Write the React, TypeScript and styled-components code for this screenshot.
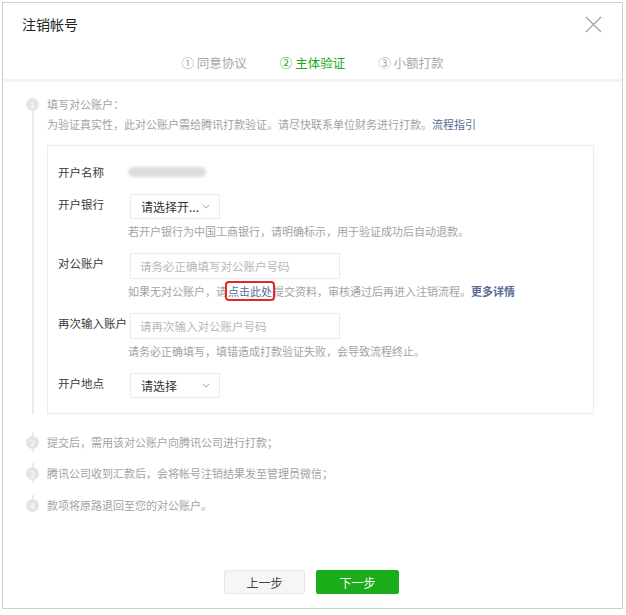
import styled, { createGlobalStyle } from 'styled-components'

const GlobalStyle = createGlobalStyle`
  html, body {
    margin: 0;
    padding: 0;
    background: #fff;
  }
  body {
    font-family: "Noto Sans CJK SC", "Noto Sans", sans-serif;
    color: #353535;
  }
`

const steps = [
  { no: '①', text: '同意协议' },
  { no: '②', text: '主体验证', active: true },
  { no: '③', text: '小额打款' },
]

export default function App() {
  return (
    <>
      <GlobalStyle />
      <Dialog>
        <Header>
          <Title>注销帐号</Title>
          <CloseIcon viewBox="0 0 18 18">
            <path d="M1 1 L17 17 M17 1 L1 17" stroke="#a3a3a3" strokeWidth="1.3" fill="none" />
          </CloseIcon>
        </Header>

        <StepNav>
          {steps.map((s) => (
            <StepTab key={s.no} $active={!!s.active}>
              {s.no} {s.text}
            </StepTab>
          ))}
        </StepNav>

        <Content>
          <Timeline>
            <Item $pad={18}>
              <Marker $first>
                <Dot>1</Dot>
              </Marker>
              <div>
                <ItemText>填写对公账户：</ItemText>
                <ItemText>
                  为验证真实性，此对公账户需给腾讯打款验证。请尽快联系单位财务进行打款。<Link>流程指引</Link>
                </ItemText>

                <FormBox>
                  <Row>
                    <Label>开户名称</Label>
                    <Field>
                      <Blurred />
                    </Field>
                  </Row>

                  <Row>
                    <Label>开户银行</Label>
                    <Field>
                      <Select>
                        请选择开...<Chevron />
                      </Select>
                      <Hint>若开户银行为中国工商银行，请明确标示，用于验证成功后自动退款。</Hint>
                    </Field>
                  </Row>

                  <Row>
                    <Label>对公账户</Label>
                    <Field>
                      <Input placeholder="请务必正确填写对公账户号码" />
                      <Hint>
                        如果无对公账户，请<Marked>点击此处</Marked>提交资料，审核通过后再进入注销流程。<Link $bold>更多详情</Link>
                      </Hint>
                    </Field>
                  </Row>

                  <Row>
                    <Label>再次输入账户</Label>
                    <Field>
                      <Input placeholder="请再次输入对公账户号码" />
                      <Hint>请务必正确填写，填错造成打款验证失败，会导致流程终止。</Hint>
                    </Field>
                  </Row>

                  <Row>
                    <Label>开户地点</Label>
                    <Field>
                      <Select>
                        请选择<Chevron />
                      </Select>
                    </Field>
                  </Row>
                </FormBox>
              </div>
            </Item>

            <Item $pad={11}>
              <Marker>
                <Dot>2</Dot>
              </Marker>
              <ItemText>提交后，需用该对公账户向腾讯公司进行打款；</ItemText>
            </Item>

            <Item $pad={12}>
              <Marker>
                <Dot>3</Dot>
              </Marker>
              <ItemText>腾讯公司收到汇款后，会将帐号注销结果发至管理员微信；</ItemText>
            </Item>

            <Item $pad={0}>
              <Marker $last>
                <Dot>4</Dot>
              </Marker>
              <ItemText>款项将原路退回至您的对公账户。</ItemText>
            </Item>
          </Timeline>
        </Content>

        <Footer>
          <Button>上一步</Button>
          <Button $primary>下一步</Button>
        </Footer>
      </Dialog>
    </>
  )
}

function Chevron() {
  return (
    <ChevronSvg viewBox="0 0 10 6">
      <path d="M1 1 L5 5 L9 1" stroke="#999" strokeWidth="1.1" fill="none" />
    </ChevronSvg>
  )
}

const Dialog = styled.div`
  margin: 2px 0 0 2px;
  width: 621px;
  height: 607px;
  box-sizing: border-box;
  border: 1px solid #cfcfcf;
  display: flex;
  flex-direction: column;
  background: #fff;
`

const Header = styled.div`
  height: 42px;
  display: flex;
  align-items: center;
  justify-content: space-between;
  padding: 0 20px 0 19px;
`

const Title = styled.div`
  font-size: 14px;
  color: #222;
`

const CloseIcon = styled.svg`
  width: 17px;
  height: 17px;
`

const StepNav = styled.div`
  height: 34px;
  display: flex;
  justify-content: center;
  align-items: center;
  gap: 33px;
  border-bottom: 3px solid #f3f3f3;
`

const StepTab = styled.div<{ $active: boolean }>`
  font-size: 12.5px;
  color: ${(p) => (p.$active ? '#1aad19' : '#a8a8a8')};
`

const Content = styled.div`
  padding: 12px 28px 0 23px;
`

const Timeline = styled.div`
  display: flex;
  flex-direction: column;
`

const Item = styled.div<{ $pad: number }>`
  display: grid;
  grid-template-columns: 13px 1fr;
  column-gap: 8px;
  padding-bottom: ${(p) => p.$pad}px;
`

const Marker = styled.div<{ $first?: boolean; $last?: boolean }>`
  display: flex;
  flex-direction: column;
  align-items: center;

  &::before {
    content: '';
    width: 2px;
    height: 4px;
    background: ${(p) => (p.$first ? 'transparent' : '#ebebeb')};
  }

  &::after {
    content: '';
    width: 2px;
    flex: 1;
    background: ${(p) => (p.$last ? 'transparent' : '#ebebeb')};
  }
`

const Dot = styled.div`
  width: 13px;
  height: 13px;
  border-radius: 50%;
  background: #e4e4e4;
  color: #fff;
  font-size: 8px;
  line-height: 13px;
  text-align: center;
  flex-shrink: 0;
`

const ItemText = styled.div`
  font-size: 11px;
  line-height: 20px;
  color: #a3a3a3;
`

const Link = styled.span<{ $bold?: boolean }>`
  color: #576b95;
  font-weight: ${(p) => (p.$bold ? 600 : 400)};
`

const Marked = styled.span`
  color: #576b95;
  outline: 2px solid #e0272a;
  outline-offset: 0;
  border-radius: 2px;
  padding: 0 1px;
`

const FormBox = styled.div`
  margin-top: 11px;
  border: 1px solid #ececec;
  padding: 16px 10px 15px 10px;
  display: flex;
  flex-direction: column;
  gap: 12px;
`

const Row = styled.div`
  display: grid;
  grid-template-columns: 72px 1fr;
`

const Label = styled.div`
  font-size: 11.5px;
  line-height: 20px;
  color: #3a3a3a;
  white-space: nowrap;
`

const Field = styled.div`
  display: flex;
  flex-direction: column;
  align-items: flex-start;
  min-height: 20px;
  justify-content: center;
`

const Blurred = styled.span`
  display: block;
  width: 78px;
  height: 10px;
  margin-left: -2px;
  border-radius: 5px;
  background: #dcdcdc;
  filter: blur(1.6px);
`

const Select = styled.div`
  width: 90px;
  height: 25px;
  box-sizing: border-box;
  border: 1px solid #ebebeb;
  padding: 0 9px 0 10px;
  display: flex;
  align-items: center;
  justify-content: space-between;
  font-size: 12px;
  color: #333;
`

const ChevronSvg = styled.svg`
  width: 8px;
  height: 5px;
`

const Input = styled.input`
  width: 210px;
  height: 26px;
  box-sizing: border-box;
  border: 1px solid #ebebeb;
  padding: 0 9px;
  font-family: inherit;
  font-size: 11.5px;
  outline: none;

  &::placeholder {
    color: #b8b8b8;
  }
`

const Hint = styled.div`
  margin-top: 2px;
  margin-left: -2px;
  font-size: 11px;
  line-height: 20px;
  color: #a3a3a3;
  white-space: nowrap;
`

const Footer = styled.div`
  margin-top: auto;
  padding-bottom: 14px;
  display: flex;
  justify-content: center;
  gap: 11px;
  padding-right: 2px;
`

const Button = styled.button<{ $primary?: boolean }>`
  width: ${(p) => (p.$primary ? 83 : 81)}px;
  height: 24px;
  border-radius: 2px;
  font-family: inherit;
  font-size: 12px;
  cursor: pointer;
  border: 1px solid ${(p) => (p.$primary ? '#1aad19' : '#e8e8e8')};
  background: ${(p) => (p.$primary ? '#1aad19' : '#f6f6f6')};
  color: ${(p) => (p.$primary ? '#fff' : '#444')};
`
